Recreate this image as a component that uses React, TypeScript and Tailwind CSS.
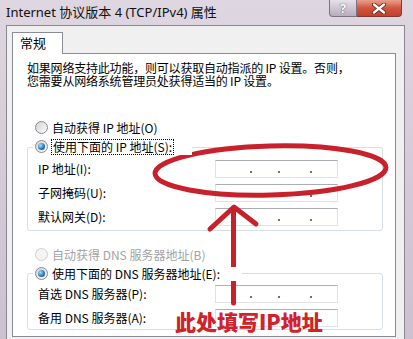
import React from "react";

const Radio = ({ checked, disabled }: { checked?: boolean; disabled?: boolean }) => (
  <span
    className={
      disabled
        ? "w-[13px] h-[13px] rounded-full border border-[#cfcfcf] bg-[#f4f4f4] flex items-center justify-center shrink-0"
        : "w-[13px] h-[13px] rounded-full border border-[#8a8a8a] bg-gradient-to-br from-[#d4d4d4] to-[#fafafa] flex items-center justify-center shrink-0"
    }
  >
    {checked && (
      <span className="w-[7px] h-[7px] rounded-full bg-[radial-gradient(circle_at_35%_35%,#a6e1fb,#2a7cc0_55%,#0e3d6b)]" />
    )}
  </span>
);

const IpBox = () => (
  <div className="w-[123px] h-[18px] border border-[#dfe3e9] border-t-[#abadb3] bg-white flex items-end pb-[4px]">
    <span className="ml-[34px] w-[2px] h-[2px] bg-[#6f6f6f]" />
    <span className="ml-[26px] w-[2px] h-[2px] bg-[#6f6f6f]" />
    <span className="ml-[30px] w-[2px] h-[2px] bg-[#6f6f6f]" />
  </div>
);

const Field = ({ label }: { label: string }) => (
  <div className="flex items-center h-[18px]">
    <div className="flex-1 text-[12px] leading-[14px] text-black">{label}</div>
    <IpBox />
  </div>
);

export default function App() {
  return (
    <div className="w-[413px] h-[339px] overflow-hidden relative bg-gradient-to-b from-[#ded6e1] to-[#cbc1cf] font-['Noto_Sans','Noto_Sans_CJK_SC',sans-serif]">
      {/* title bar */}
      <div className="h-[25px] flex items-start">
        <div className="pl-[6px] pt-[3px] text-[13px] leading-[18px] text-[#111]">
          Internet 协议版本 4 (TCP/IPv4) 属性
        </div>
        <div className="ml-auto mr-[11px] flex">
          <div className="w-[28px] h-[17px] rounded-bl-[4px] border border-t-0 border-[#7c7382] bg-gradient-to-b from-[#e6e0ea] to-[#b7adbd] flex items-center justify-center">
            <span className="text-[13px] leading-[13px] font-bold text-white [text-shadow:0_0_1px_#555,0_0_1px_#555]">?</span>
          </div>
          <div className="w-[45px] h-[17px] rounded-br-[4px] border border-l-0 border-t-0 border-[#7a3a33] bg-gradient-to-b from-[#e8a08c] via-[#d0553f] to-[#c2402b] flex items-center justify-center">
            <svg width="14" height="11" viewBox="0 0 14 11">
              <path d="M2 1.5 L12 9.5 M12 1.5 L2 9.5" stroke="#5a2018" strokeWidth="4" strokeLinecap="round" />
              <path d="M2 1.5 L12 9.5 M12 1.5 L2 9.5" stroke="#ffffff" strokeWidth="2.4" strokeLinecap="round" />
            </svg>
          </div>
        </div>
      </div>

      {/* window body */}
      <div className="flex">
        <div className="w-[6px]" />
        <div className="w-[399px] h-[314px] overflow-hidden bg-[#f0f0f0] border-l border-t border-r border-[#8d8591] pl-[5px] pt-[6px] pr-[7px]">
          <div className="relative z-10 w-[51px] h-[22px] -mb-px bg-white border-l border-t border-r border-[#898c95] pl-[7px] pt-[2px] text-[13px] leading-[16px] font-['Noto_Sans_CJK_SC',sans-serif] text-black">
            常规
          </div>
          <div className="w-[384px] border border-[#898c95] bg-white pb-[6px] font-['Noto_Sans_CJK_SC',sans-serif]">
            <div className="ml-[14px] mt-[7px] text-[12px] leading-[13px] text-black tracking-[-0.2px]">
              <div>如果网络支持此功能，则可以获取自动指派的 IP 设置。否则，</div>
              <div>您需要从网络系统管理员处获得适当的 IP 设置。</div>
            </div>

            {/* IP section */}
            <div className="mt-[31px] h-[19px] flex items-center pl-[20px]">
              <span className="flex items-center gap-[4px] pl-[2px]">
                <Radio />
                <span className="text-[12px] leading-[14px] text-black">自动获得 IP 地址(O)</span>
              </span>
            </div>
            <div className="relative z-10 h-[19px] flex items-center pl-[20px]">
              <span className="flex items-center gap-[3px] pl-[2px] pr-[18px] bg-white">
                <Radio checked />
                <span className="text-[12px] leading-[14px] text-black border border-dotted border-black px-[1px]">
                  使用下面的 IP 地址(S):
                </span>
              </span>
            </div>
            <div className="-mt-[9px] ml-[14px] w-[356px] border border-[#d5dfe5] rounded-[3px] pt-[12px] pb-[4px] pl-[10px] pr-[44px] flex flex-col gap-[6px]">
              <Field label="IP 地址(I):" />
              <Field label="子网掩码(U):" />
              <Field label="默认网关(D):" />
            </div>

            {/* DNS section */}
            <div className="mt-[14px] h-[19px] flex items-center pl-[20px]">
              <span className="flex items-center gap-[4px] pl-[2px]">
                <Radio disabled />
                <span className="text-[12px] leading-[14px] text-[#a3a3a3]">自动获得 DNS 服务器地址(B)</span>
              </span>
            </div>
            <div className="relative z-10 h-[19px] flex items-center pl-[20px]">
              <span className="flex items-center gap-[4px] pl-[2px] pr-[22px] bg-white">
                <Radio checked />
                <span className="text-[12px] leading-[14px] text-black">使用下面的 DNS 服务器地址(E):</span>
              </span>
            </div>
            <div className="-mt-[10px] ml-[14px] w-[356px] border border-[#d5dfe5] rounded-[3px] pt-[11px] pb-[2px] pl-[10px] pr-[44px] flex flex-col gap-[6px]">
              <Field label="首选 DNS 服务器(P):" />
              <Field label="备用 DNS 服务器(A):" />
            </div>
          </div>
        </div>
      </div>

      {/* red annotation */}
      <svg className="absolute left-0 top-0 pointer-events-none" width="413" height="339" viewBox="0 0 413 339">
        <ellipse cx="270.5" cy="170.5" rx="115.5" ry="24.5" transform="rotate(-1.5 270.5 170.5)" fill="none" stroke="#c8212b" strokeWidth="5" />
        <path d="M233.5 303 L233.5 210" stroke="#c8212b" strokeWidth="5" strokeLinecap="round" />
        <path d="M210 229 L234 207 L256 224" fill="none" stroke="#c8212b" strokeWidth="5" strokeLinecap="round" strokeLinejoin="round" />
      </svg>
      <div className="absolute left-[175px] top-[307px] text-[21px] leading-[28px] font-black text-[#d0222a] font-['Noto_Sans_CJK_SC',sans-serif] [text-shadow:0_0_1px_#ffffff]">
        此处填写IP地址
      </div>
    </div>
  );
}
